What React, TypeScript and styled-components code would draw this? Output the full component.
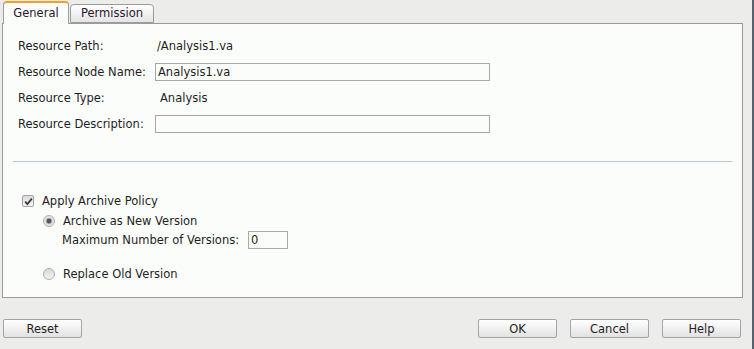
import styled, { createGlobalStyle } from "styled-components";

const GlobalStyle = createGlobalStyle`
  html, body {
    margin: 0;
    padding: 0;
    background: #ecedea;
  }
  body {
    font-family: "DejaVu Sans", Verdana, sans-serif;
    font-size: 11.5px;
    color: #1e1e1e;
  }
`;

interface FieldRow {
  label: string;
  value: string;
  kind: "text" | "input";
}

const fields: FieldRow[] = [
  { label: "Resource Path:", value: "/Analysis1.va", kind: "text" },
  { label: "Resource Node Name:", value: "Analysis1.va", kind: "input" },
  { label: "Resource Type:", value: "Analysis", kind: "text" },
  { label: "Resource Description:", value: "", kind: "input" },
];

function App() {
  return (
    <Page>
      <GlobalStyle />
      <Dialog>
        <TabBar>
          <Tab $active $width={66}>General</Tab>
          <Tab $width={84}>Permission</Tab>
        </TabBar>

        <Panel>
          <FieldGrid>
            {fields.map((f) => (
              <Row key={f.label}>
                <Label>{f.label}</Label>
                {f.kind === "input" ? (
                  <TextInput defaultValue={f.value} />
                ) : (
                  <Value $indent={f.label === "Resource Type:"}>{f.value}</Value>
                )}
              </Row>
            ))}
          </FieldGrid>

          <Separator />

          <Policy>
            <OptionRow>
              <CheckBox>
                <svg width="9" height="9" viewBox="0 0 9 9">
                  <path d="M1.2 4.6 L3.4 7 L7.8 1.6" fill="none" stroke="#3a3a3a" strokeWidth="1.8" />
                </svg>
              </CheckBox>
              <span>Apply Archive Policy</span>
            </OptionRow>
            <SubOptions>
              <OptionRow>
                <Radio $checked />
                <span>Archive as New Version</span>
              </OptionRow>
              <MaxRow>
                <span>Maximum Number of Versions:</span>
                <SmallInput defaultValue="0" />
              </MaxRow>
              <OptionRow $spaced>
                <Radio />
                <span>Replace Old Version</span>
              </OptionRow>
            </SubOptions>
          </Policy>
        </Panel>

        <Footer>
          <Button>Reset</Button>
          <ButtonGroup>
            <Button>OK</Button>
            <Button>Cancel</Button>
            <Button>Help</Button>
          </ButtonGroup>
        </Footer>
      </Dialog>
    </Page>
  );
}

export default App;

const Page = styled.div`
  width: 754px;
  height: 349px;
  box-sizing: border-box;
  border-right: 2px solid #56626e;
  background: #ecedea;
  overflow: hidden;
`;
const Dialog = styled.div`
  width: 752px;
  padding-left: 2px;
  box-sizing: border-box;
`;
const TabBar = styled.div`
  display: flex;
  align-items: flex-end;
  gap: 1px;
  height: 23px;
  padding-left: 1px;
  position: relative;
  z-index: 1;
`;
const Tab = styled.div<{ $active?: boolean; $width: number }>`
  box-sizing: border-box;
  width: ${(p) => p.$width}px;
  height: ${(p) => (p.$active ? "23px" : "19px")};
  margin-bottom: ${(p) => (p.$active ? "-1px" : "0")};
  padding-top: ${(p) => (p.$active ? "3px" : "1px")};
  text-align: center;
  border: 1px solid #9c9c9c;
  border-top: ${(p) => (p.$active ? "2px solid #f0a030" : "1px solid #9c9c9c")};
  border-bottom: ${(p) => (p.$active ? "none" : "1px solid #9c9c9c")};
  border-radius: 4px 4px 0 0;
  background: ${(p) =>
    p.$active ? "#fbfdfb" : "linear-gradient(#ffffff, #e4e4e4)"};
  color: #2a1630;
  font-size: 11.5px;
  line-height: 15px;
`;
const Panel = styled.div`
  box-sizing: border-box;
  width: 741px;
  height: 275px;
  border: 1px solid #9a9a9a;
  background: #fbfdfb;
  padding: 9px 10px 0 10px;
`;
const FieldGrid = styled.div`
  padding-left: 5px;
`;
const Row = styled.div`
  display: flex;
  align-items: center;
  height: 26px;
`;
const Label = styled.div`
  width: 137px;
  flex-shrink: 0;
`;
const Value = styled.div<{ $indent?: boolean }>`
  padding-left: ${(p) => (p.$indent ? "5px" : "2px")};
`;
const TextInput = styled.input`
  box-sizing: border-box;
  width: 335px;
  height: 18px;
  border: 1px solid #a8a8a8;
  background: #fbfdfb;
  padding: 0 2px;
  font: inherit;
  color: #1e1e1e;
  outline: none;
`;
const Separator = styled.div`
  height: 1px;
  background: #b9c5cc;
  margin-top: 24px;
`;
const Policy = styled.div`
  padding: 29px 0 0 9px;
`;
const OptionRow = styled.div<{ $spaced?: boolean }>`
  display: flex;
  align-items: center;
  gap: 8px;
  height: 20px;
  margin-top: ${(p) => (p.$spaced ? "15px" : "0")};
`;
const SubOptions = styled.div`
  padding-left: 21px;
`;
const MaxRow = styled.div`
  display: flex;
  align-items: center;
  gap: 9px;
  height: 18px;
  padding-left: 19px;
`;
const SmallInput = styled.input`
  box-sizing: border-box;
  width: 40px;
  height: 18px;
  border: 1px solid #a8a8a8;
  background: #fbfdfb;
  padding: 0 2px;
  font: inherit;
  color: #1e1e1e;
  outline: none;
`;
const CheckBox = styled.span`
  box-sizing: border-box;
  width: 12px;
  height: 12px;
  border: 1px solid #a6a6a6;
  border-radius: 2px;
  background: linear-gradient(#dcdcdc, #f2f2f2);
  display: flex;
  align-items: center;
  justify-content: center;
`;
const Radio = styled.span<{ $checked?: boolean }>`
  box-sizing: border-box;
  width: 12px;
  height: 12px;
  border: 1px solid #b0b0b0;
  border-radius: 50%;
  background: ${(p) =>
    p.$checked
      ? "radial-gradient(circle, #555 0 2px, #999 2.5px, #dedede 3.5px, #f4f4f4 100%)"
      : "linear-gradient(#d8d8d8, #f4f4f4)"};
`;
const Footer = styled.div`
  display: flex;
  justify-content: space-between;
  padding: 21px 11px 0 1px;
`;
const ButtonGroup = styled.div`
  display: flex;
  gap: 13px;
`;
const Button = styled.button`
  box-sizing: border-box;
  width: 79px;
  height: 19px;
  padding: 0;
  border: 1px solid #a4a4a4;
  border-radius: 2px;
  background: linear-gradient(#ffffff, #f2f2f2 45%, #e2e2e2);
  font-family: "DejaVu Sans", Verdana, sans-serif;
  font-size: 11.5px;
  color: #1e1e1e;
`;
